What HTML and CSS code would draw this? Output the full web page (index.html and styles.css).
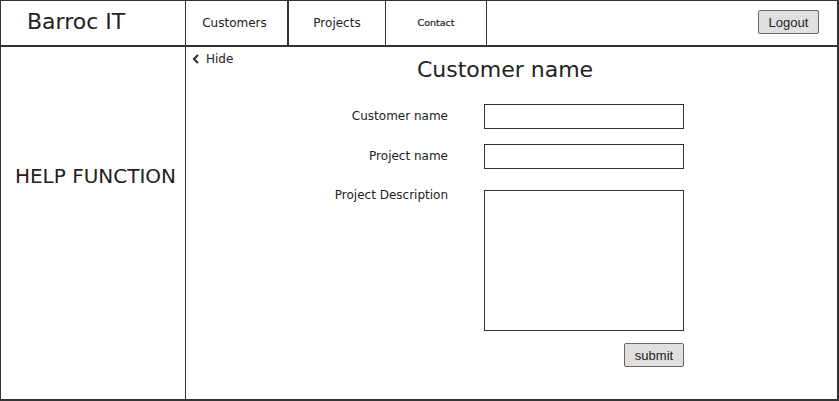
FILE: index.html
```html
<!DOCTYPE html>
<html lang="en">
<head>
<meta charset="utf-8">
<title>Barroc IT</title>
<link rel="stylesheet" href="styles.css">
</head>
<body>
<div class="frame">
  <header class="topbar">
    <div class="brand">Barroc IT</div>
    <nav class="nav">
      <a class="nav-item nav-customers">Customers</a>
      <a class="nav-item nav-projects">Projects</a>
      <a class="nav-item nav-contact">Contact</a>
    </nav>
    <div class="spacer"></div>
    <button class="btn logout" type="button">Logout</button>
  </header>
  <div class="content">
    <aside class="sidebar">HELP FUNCTION</aside>
    <main class="main">
      <div class="head-row">
        <a class="hide"><svg class="chev" width="8" height="10" viewBox="0 0 8 10"><polyline points="6,1 2,5 6,9" fill="none" stroke="#333" stroke-width="2.2" stroke-linejoin="miter"/></svg>Hide</a>
        <h1 class="title">Customer name</h1>
        <div></div>
      </div>
      <form class="form">
        <label class="label row-1">Customer name</label>
        <input class="field row-1" type="text">
        <label class="label row-2">Project name</label>
        <input class="field row-2" type="text">
        <label class="label label-top">Project Description</label>
        <textarea class="field area"></textarea>
        <button class="btn submit" type="button">submit</button>
      </form>
    </main>
  </div>
</div>
</body>
</html>
```

FILE: styles.css
```css
* { box-sizing: border-box; }
html, body { margin: 0; padding: 0; background: #fff; }
body { font-family: "DejaVu Sans", sans-serif; color: #222; }

.frame {
  width: 839px;
  height: 401px;
  border: 1px solid #333;
  border-right-width: 2px;
  border-bottom-width: 2px;
  display: flex;
  flex-direction: column;
}

.topbar {
  height: 46px;
  flex: none;
  display: flex;
  align-items: stretch;
  border-bottom: 2px solid #333;
}
.brand {
  width: 185px;
  border-right: 1px solid #333;
  font-size: 22px;
  line-height: 26px;
  padding-left: 26px;
  display: flex;
  align-items: center;
  padding-bottom: 3px;
}
.nav { display: flex; }
.nav-item {
  display: flex;
  align-items: center;
  justify-content: center;
  border-right: 1px solid #333;
  font-size: 12px;
  color: #222;
  padding-bottom: 1px;
}
.nav-customers { width: 103px; border-right-width: 2px; padding-right: 4px; }
.nav-projects { width: 97px; }
.nav-contact { width: 101px; font-size: 9.5px; -webkit-text-stroke: 0.2px #222; }
.spacer { flex: 1; }

.btn {
  font-family: "Liberation Sans", Arial, sans-serif;
  font-size: 13px;
  color: #222;
  background: #e0e0e0;
  border: 1px solid #666;
  border-radius: 2px;
  padding: 0;
  height: 24px;
  width: 61px;
}
.logout { align-self: flex-start; margin-top: 9px; margin-right: 18px; }

.content { flex: 1; display: flex; min-height: 0; }
.sidebar {
  width: 185px;
  flex: none;
  border-right: 1px solid #333;
  font-size: 20px;
  line-height: 24px;
  text-align: center;
  padding-top: 117px;
  padding-left: 5px;
}
.main { flex: 1; display: flex; flex-direction: column; }

.head-row {
  display: grid;
  grid-template-columns: 1fr auto 1fr;
  padding-right: 13px;
}
.hide {
  align-self: start;
  margin-top: 4px;
  margin-left: 6px;
  display: flex;
  align-items: center;
  gap: 6px;
  font-size: 12px;
  line-height: 16px;
  color: #222;
}
.chev { display: block; }
.title {
  margin: 10px 0 0;
  font-size: 22px;
  line-height: 26px;
  font-weight: normal;
}

.form {
  margin-top: 21px;
  display: grid;
  grid-template-columns: 262px 200px;
  column-gap: 36px;
  row-gap: 12px;
}
.label {
  font-size: 12px;
  line-height: 16px;
  text-align: right;
  align-self: start;
}
.label-top { margin-top: -3px; }
.field {
  width: 200px;
  height: 25px;
  border: 1px solid #333;
  background: #fff;
  margin: 0;
  font: inherit;
}
.field.row-1 { margin-bottom: 3px; }
.field.row-2 { margin-bottom: 9px; }
.label.row-1, .label.row-2 { margin-top: 4px; }
.area { height: 141px; resize: none; }
.submit { grid-column: 2; justify-self: end; width: 60px; height: 24px; }
```
